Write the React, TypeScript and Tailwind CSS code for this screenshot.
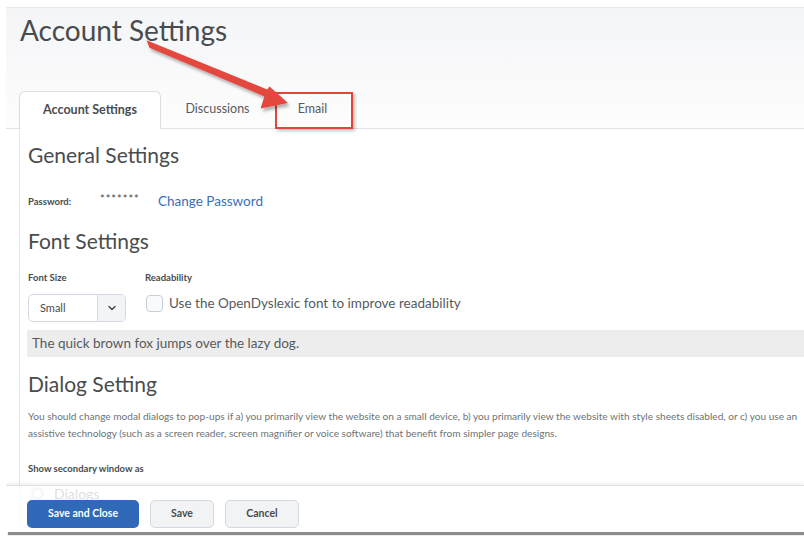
import { ChevronDown } from "lucide-react";

const tabs = [
  { label: "Account Settings", width: "w-[142px]", active: true },
  { label: "Discussions", width: "w-[113px]", active: false },
  { label: "Email", width: "w-[77px]", active: false },
];

function Tabs() {
  return (
    <div className="flex h-[38px] items-stretch">
      <div className="w-[13px] border-b border-[#e0e3e8]" />
      {tabs.map((t) =>
        t.active ? (
          <div
            key={t.label}
            className={`${t.width} flex items-center justify-center rounded-t-[6px] border border-b-0 border-[#d9dde4] bg-white text-[12.5px] font-bold text-[#494c4e]`}
          >
            {t.label}
          </div>
        ) : (
          <div
            key={t.label}
            className={`${t.width} flex items-center justify-center border-b border-[#e0e3e8] text-[12.5px] text-[#565a5c]`}
          >
            {t.label}
          </div>
        ),
      )}
      <div className="flex-1 border-b border-[#e0e3e8]" />
    </div>
  );
}

function Heading({ children }: { children: React.ReactNode }) {
  return (
    <h2 className="flex h-[26px] items-center pb-[4px] text-[21px] leading-none text-[#494c4e]">{children}</h2>
  );
}

function Label({ children }: { children: React.ReactNode }) {
  return <div className="flex h-[14px] items-center text-[9.5px] font-bold text-[#494c4e]">{children}</div>;
}

function Footer() {
  return (
    <div className="absolute bottom-0 left-0 right-0 flex h-[47px] gap-[11px] border-t border-[#dfe1e5] bg-white/80 pl-[21px] pt-[14px] shadow-[0_-2px_3px_rgba(0,0,0,0.06)]">
      <button className="h-[28px] w-[112px] rounded-[5px] bg-[#2f69b7] text-[10.5px] font-bold text-white">
        Save and Close
      </button>
      <button className="h-[28px] w-[64px] rounded-[5px] border border-[#d3d9e3] bg-[#f1f3f5] text-[10.5px] font-bold text-[#494c4e]">
        Save
      </button>
      <button className="h-[28px] w-[74px] rounded-[5px] border border-[#d3d9e3] bg-[#f1f3f5] text-[10.5px] font-bold text-[#494c4e]">
        Cancel
      </button>
    </div>
  );
}

function Annotation() {
  return (
    <>
      <div className="pointer-events-none absolute left-[275px] top-[92px] h-[37px] w-[78px] border-2 border-[#e3453d] shadow-[2px_2px_3px_rgba(0,0,0,0.25)]" />
      <svg className="pointer-events-none absolute left-0 top-0" width="804" height="537" viewBox="0 0 804 537">
        <defs>
          <filter id="arrowShadow" x="-10%" y="-10%" width="130%" height="140%">
            <feDropShadow dx="2" dy="3" stdDeviation="1.5" floodColor="#000" floodOpacity="0.3" />
          </filter>
        </defs>
        <polygon
          points="146.5,40.3 149.5,47.7 264.4,96.4 260.5,108.5 288,103 269.5,86.5 267.2,89.5"
          fill="#e4463d"
          filter="url(#arrowShadow)"
        />
      </svg>
    </>
  );
}

export default function App() {
  return (
    <div className="relative h-[537px] w-[804px] overflow-hidden bg-white font-['Lato',sans-serif]">
      <div className="relative ml-[6px] mt-[7px] flex h-[525px] w-[798px] flex-col overflow-hidden border-t border-[#e6e8ec] bg-white shadow-[2px_3px_1px_rgba(0,0,0,0.45)]">
        <header className="h-[121px] bg-gradient-to-b from-[#f4f5f7] to-[#fdfdfd]">
          <h1 className="ml-[14px] mt-[5px] h-[78px] text-[28px] leading-[34px] text-[#494c4e]">Account Settings</h1>
          <Tabs />
        </header>

        <main className="ml-[13px] flex-1 border-l border-[#e3e6ea] pl-[8px] pt-[14px]">
          <Heading>General Settings</Heading>

          <div className="mt-[22px] flex h-[22px] items-center">
            <span className="w-[72px] text-[9.5px] font-bold text-[#494c4e]">Password:</span>
            <span className="w-[58px] pb-[5px] text-[11px] tracking-[1px] text-[#494c4e]">*******</span>
            <a className="pb-[1px] text-[13.5px] text-[#3b6fb6]">Change Password</a>
          </div>

          <div className="mt-[16px]">
            <Heading>Font Settings</Heading>
          </div>

          <div className="mt-[16px] flex">
            <div className="w-[117px]">
              <Label>Font Size</Label>
            </div>
            <Label>Readability</Label>
          </div>

          <div className="mt-[9px] flex h-[28px]">
            <div className="flex h-[28px] w-[98px] overflow-hidden rounded-[5px] border border-[#d3d9e3] bg-white">
              <span className="flex flex-1 items-center pl-[11px] text-[11px] text-[#494c4e]">Small</span>
              <span className="flex w-[28px] items-center justify-center border-l border-[#d3d9e3] bg-[#f3f4f6]">
                <ChevronDown size={12} strokeWidth={3} className="text-[#494c4e]" />
              </span>
            </div>
            <div className="ml-[20px] mt-[1px] flex h-[17px] items-center">
              <span className="h-[17px] w-[17px] rounded-[4px] border border-[#c9ced6] bg-[#f9fafb]" />
              <span className="ml-[6px] text-[13.5px] text-[#565a5c]">
                Use the OpenDyslexic font to improve readability
              </span>
            </div>
          </div>

          <div className="-ml-[1px] mt-[8px] flex h-[27px] items-center bg-[#ededed] pl-[5px] text-[13.5px] text-[#565a5c]">
            The quick brown fox jumps over the lazy dog.
          </div>

          <div className="mt-[15px]">
            <Heading>Dialog Setting</Heading>
          </div>

          <p className="mt-[10px] text-[10.1px] leading-[17px] text-[#6e7376]">
            You should change modal dialogs to pop-ups if a) you primarily view the website on a small device, b) you
            primarily view the website with style sheets disabled, or c) you use an assistive technology (such as a
            screen reader, screen magnifier or voice software) that benefit from simpler page designs.
          </p>

          <div className="mt-[20px]">
            <Label>Show secondary window as</Label>
          </div>

          <div className="mt-[8px] flex h-[18px] items-center gap-[10px] pl-[3px]">
            <span className="h-[13px] w-[13px] rounded-full border-[3px] border-[#d6d9de] bg-white" />
            <span className="text-[14px] text-[#565a5c]">Dialogs</span>
          </div>
        </main>

        <Footer />
      </div>
      <Annotation />
    </div>
  );
}
